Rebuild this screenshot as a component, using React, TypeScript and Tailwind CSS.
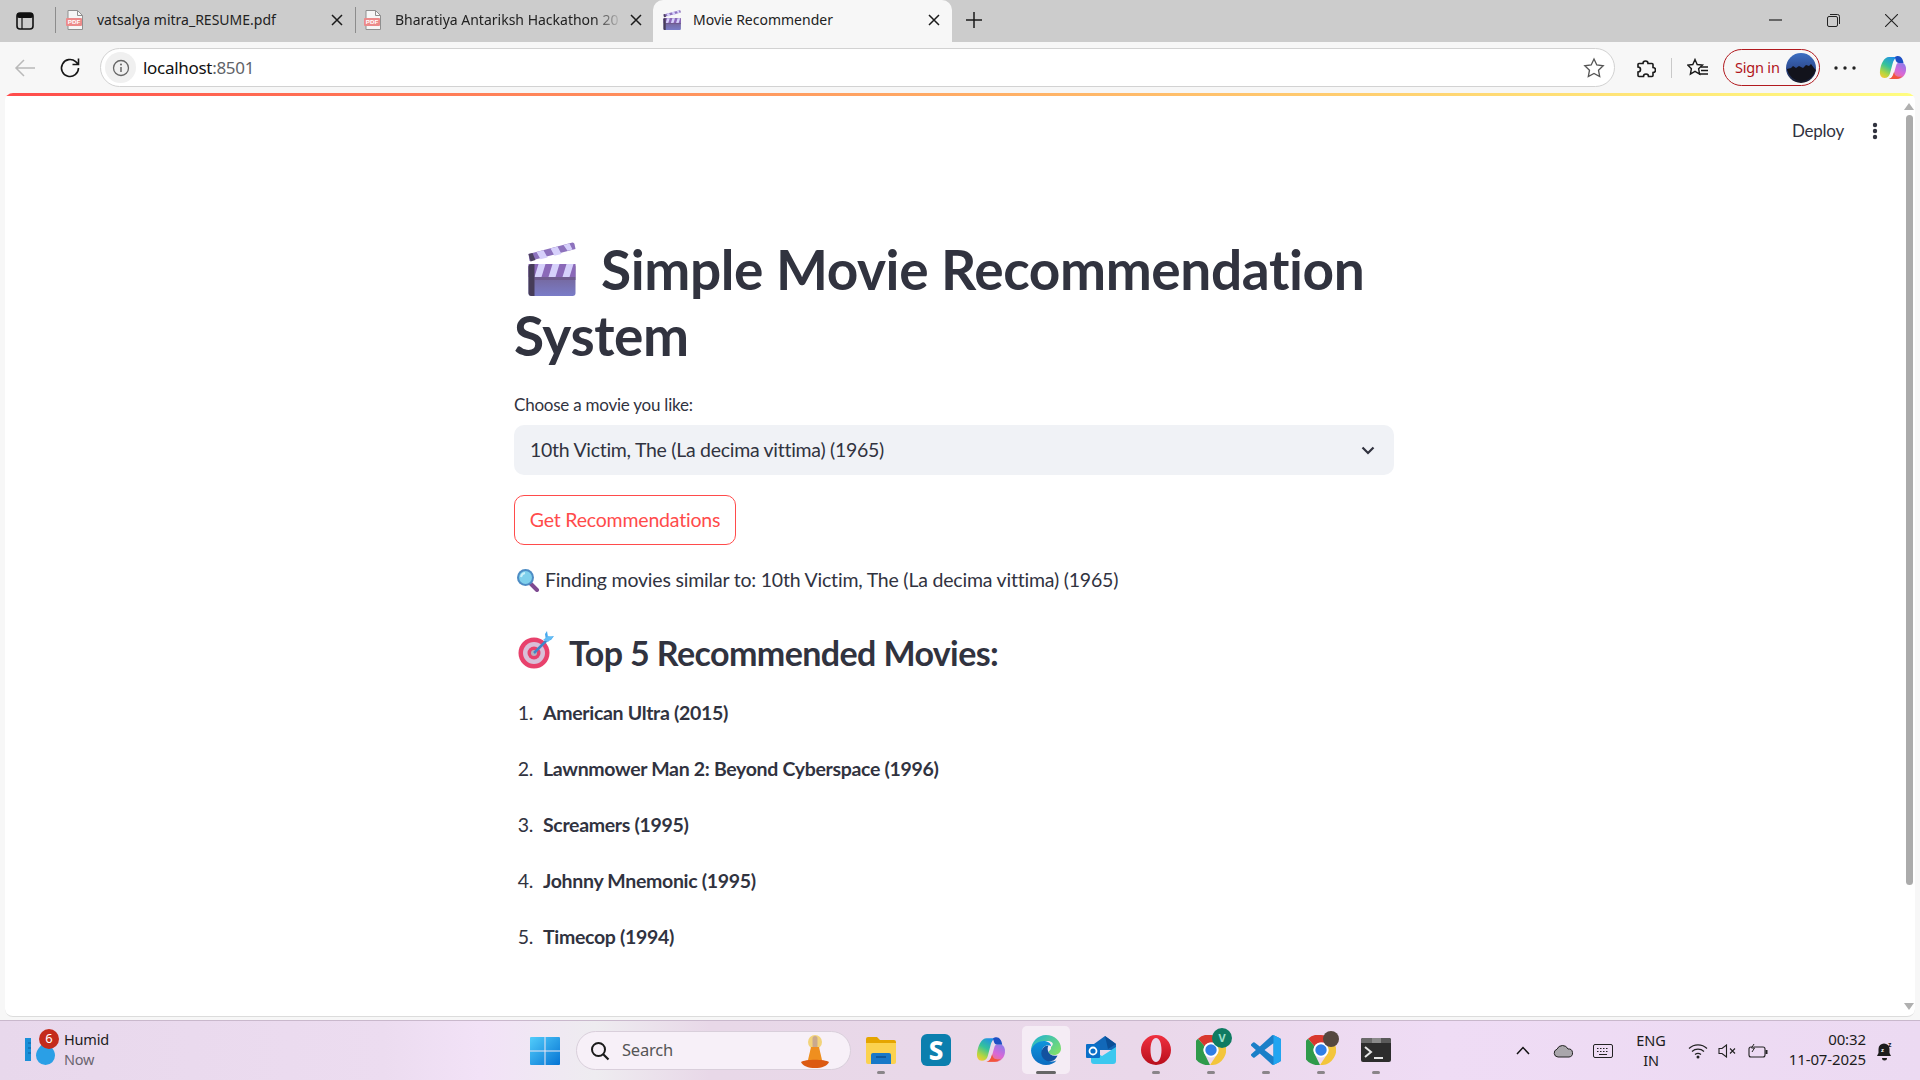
import React from "react";

const UI = "font-['Noto_Sans','Open_Sans',sans-serif]";

function PdfIcon() {
  return (
    <svg width="20" height="22" viewBox="0 0 20 22" className="shrink-0">
      <path d="M3 1.500h9.500L17.500 6.500V20.500H3z" fill="#f6f6f6" stroke="#8f8f8f" strokeWidth="1" />
      <path d="M12.500 1.500V6.500H17.500" fill="none" stroke="#8f8f8f" strokeWidth="1" />
      <rect x="1" y="9" width="16" height="8" rx="1" fill="#ec8a8a" />
      <text x="9" y="15.400" textAnchor="middle" fontSize="6.200" fontWeight="700" fill="#fff" fontFamily="Liberation Sans">PDF</text>
    </svg>
  );
}

function Clapper({ w, h }: { w: number; h: number }) {
  return (
    <svg width={w} height={h} viewBox="0 0 48 54" className="shrink-0">
      <defs>
        <linearGradient id="clapBody" x1="0" y1="0" x2="0" y2="1">
          <stop offset="0" stopColor="#725a80" />
          <stop offset="1" stopColor="#7a7cc8" />
        </linearGradient>
      </defs>
      <path d="M1 12 45 0.500a2 2 0 0 1 2 1.500l1 5-46 12z" fill="#8d72bd" />
      <path d="M1 12l4-1 3 7-5 1.500z" fill="#4d4260" />
      <path d="M9 10 16 8.200 20 15.500 13 17.300zM23 6.400 30 4.600 34 11.900 27 13.700zM36 3 42 1.500 45 7.500 40 8.800z" fill="#d6d0fb" />
      <rect x="1" y="22" width="47" height="32" rx="3" fill="url(#clapBody)" />
      <path d="M1 22h47v13H1z" fill="#8a68b8" />
      <path d="M11 22h7l-4 13H7zM25 22h7l-4 13h-7zM39 22h7l-4 13h-7z" fill="#d6d0fb" />
      <rect x="7" y="35" width="41" height="3" fill="#6f5b8f" />
      <path d="M4 22h3v32H4a3 3 0 0 1-3-3V25a3 3 0 0 1 3-3z" fill="#463c58" />
    </svg>
  );
}

function Magnifier() {
  return (
    <svg width="24" height="24" viewBox="0 0 24 24" className="shrink-0">
      <path d="M14 15l7 7" stroke="#7e4a91" strokeWidth="4" strokeLinecap="round" />
      <circle cx="9.500" cy="9.500" r="8.500" fill="#4d8cc4" />
      <circle cx="9.500" cy="9.500" r="6.500" fill="#7fd0ec" />
      <path d="M5 9a5 5 0 0 1 4-4" stroke="#c8f0fa" strokeWidth="2" fill="none" />
    </svg>
  );
}

function Target() {
  return (
    <svg width="40" height="38" viewBox="0 0 40 38" className="shrink-0">
      <circle cx="16" cy="22" r="15.500" fill="#e8416c" />
      <circle cx="16" cy="22" r="11" fill="#d9bfd8" />
      <circle cx="16" cy="22" r="6.500" fill="#e8416c" />
      <circle cx="16" cy="22" r="3" fill="#b5b0bd" />
      <path d="M16 22 31 7" stroke="#3f86c8" strokeWidth="2.500" />
      <path d="M27 3l2-3 1 6 6-1-3 4-5 1z" fill="#48a9ee" />
      <path d="M25 9l5-4 5 1-5 5z" fill="#63bdf5" />
    </svg>
  );
}

function CopilotIcon({ s, id }: { s: number; id: string }) {
  return (
    <svg width={s} height={s} viewBox="0 0 28 28" className="shrink-0">
      <defs>
        <linearGradient id={`${id}A`} x1="0.700" y1="0" x2="0.200" y2="1">
          <stop offset="0" stopColor="#1f8fe8" />
          <stop offset="0.450" stopColor="#35c39a" />
          <stop offset="0.800" stopColor="#b6d63e" />
          <stop offset="1" stopColor="#f0c93a" />
        </linearGradient>
        <linearGradient id={`${id}B`} x1="0.800" y1="0" x2="0.200" y2="1">
          <stop offset="0" stopColor="#8e7bea" />
          <stop offset="0.500" stopColor="#d868d8" />
          <stop offset="1" stopColor="#f77c6a" />
        </linearGradient>
      </defs>
      <path d="M10 3h9c-3 .5-4.500 3-5.500 7L11 19.500C10.300 22 8.500 24 5.500 24 2 24 .5 21 1 17 1.700 10 5 3 10 3z" fill={`url(#${id}A)`} />
      <path d="M16 3c1-1 2-1 3-1 3 0 5 3 5.500 7H20c-2 0-3-1.500-3.500-3.500C16.200 4.500 16 3.500 16 3z" fill="#1d4fc4" />
      <path d="M19.500 9H24c2 1 3.500 3.500 3 7.500-.6 4.500-4 8.500-8.500 8.500H10c2.500-.5 4-2.500 5-6l2-7c.5-2 1-3 2.500-3z" fill={`url(#${id}B)`} />
      <path d="M9.500 25h8c2 0 4-1 5.500-2.500-2 .5-5 .5-6.500-1-1-1-1.200-2.500-1.500-3.500l-.5 1.500c-1 3.500-2.500 5-5 5.500z" fill="#f2543d" />
    </svg>
  );
}

function EdgeIcon() {
  return (
    <svg width="30" height="30" viewBox="0 0 30 30">
      <defs>
        <linearGradient id="edgeG" x1="0" y1="0" x2="1" y2="0.800">
          <stop offset="0" stopColor="#1bb0d8" />
          <stop offset="1" stopColor="#7fe06a" />
        </linearGradient>
        <linearGradient id="edgeB" x1="0" y1="0" x2="0" y2="1">
          <stop offset="0" stopColor="#0f94dc" />
          <stop offset="1" stopColor="#0c6cc0" />
        </linearGradient>
      </defs>
      <path d="M15 0c8.500 0 15 6 15 13.500 0 4-3 6.500-7 6.500-3 0-5.500-1-5.500-2.500 0-2 3-2 2.500-5.500C24.500 8 20 5.500 15 6 8 6.500 3 10 0 15 .5 6.500 7 0 15 0z" fill="url(#edgeG)" />
      <path d="M0 15C2 9.500 7 6 12.500 6 17 6 20 8.500 20 11c-3-1.500-7-.5-8.500 3-1.800 4.500.5 10 6.500 12 2 .7 5 .5 7.500-.5-2.500 2.800-6 4.500-10.500 4.500C7 30 0 23.500 0 15z" fill="url(#edgeB)" />
      <path d="M11.500 14c1.200-2.500 3.500-3.500 6-3.500-1 1.500-1 3.500-.5 5.500 1 3.500 4.500 5.500 9.500 4.500-1 2-2 3.800-4 5-2 .8-5 1-7 .2-5-2-6.500-8-4-11.700z" fill="#13529f" />
    </svg>
  );
}

function ChromeIcon({ badge }: { badge?: "v" | "p" }) {
  return (
    <div className="relative w-[30px] h-[30px]">
      <svg width="30" height="30" viewBox="0 0 30 30">
        <path d="M15 0a15 15 0 0 1 13 7.500H15a7.500 7.500 0 0 0-6.500 3.750L2 3.800A15 15 0 0 1 15 0z" fill="#d9382e" />
        <path d="M2 3.800 8.500 11.250a7.500 7.500 0 0 0 0 7.500L14 30A15 15 0 0 1 2 3.800z" fill="#2f9a4b" />
        <path d="M28 7.500A15 15 0 0 1 14 30l7.500-11.250a7.500 7.500 0 0 0 0-7.500z" fill="#f3c53c" />
        <circle cx="15" cy="15" r="7.500" fill="#fff" />
        <circle cx="15" cy="15" r="5.700" fill="#2f7ee6" />
      </svg>
      {badge === "v" && (
        <div className="absolute -top-[7px] -right-[6px] w-[20px] h-[20px] rounded-full bg-[#0f7b62] text-[#9fe0cc] text-[11px] font-bold flex items-center justify-center">V</div>
      )}
      {badge === "p" && (
        <div className="absolute -top-[4px] -right-[3px] w-[16px] h-[16px] rounded-full bg-[#55473f]" />
      )}
    </div>
  );
}

function Slot({ children, dot = true, active = false }: { children: React.ReactNode; dot?: boolean; active?: boolean }) {
  return (
    <div className={`relative w-[48px] h-[48px] rounded-[5px] flex items-center justify-center ${active ? "bg-[#f5ecf5]" : ""}`}>
      {children}
      {dot && (
        <div className={`absolute bottom-0 left-1/2 -translate-x-1/2 h-[3.500px] rounded-full ${active ? "w-[20px] bg-[#666666]" : "w-[8px] bg-[#8a8589]"}`} />
      )}
    </div>
  );
}

const movies = [
  "American Ultra (2015)",
  "Lawnmower Man 2: Beyond Cyberspace (1996)",
  "Screamers (1995)",
  "Johnny Mnemonic (1995)",
  "Timecop (1994)",
];

function Tab({ title, active, icon, fade, pad }: { title: string; active?: boolean; icon: React.ReactNode; fade?: boolean; pad: string }) {
  return (
    <div className={`relative h-[42px] w-[299px] shrink-0 flex items-center pb-[3px] pr-[12px] ${pad} ${active ? "bg-[#f7f7f7] rounded-t-[10px]" : ""}`}>
      {icon}
      <span className={`ml-[12px] flex-1 whitespace-nowrap text-[14px] text-[#222] ${fade ? "[mask-image:linear-gradient(to_right,black_88%,transparent)]" : ""}`}>{title}</span>
      <svg width="12" height="12" viewBox="0 0 12 12" className="ml-[8px] shrink-0">
        <path d="M1 1l10 10M11 1 1 11" stroke="#1b1b1b" strokeWidth="1.500" />
      </svg>
    </div>
  );
}

export default function App() {
  return (
    <div className={`w-[1920px] h-[1080px] overflow-hidden flex flex-col bg-[#f7f7f7] ${UI}`}>
      {/* Tab strip */}
      <div className="h-[42px] shrink-0 bg-[#cccccc] flex items-center">
        <div className="w-[55px] h-[42px] flex items-center justify-center shrink-0">
          <svg width="20" height="20" viewBox="0 0 20 20" className="mr-[5px]">
            <rect x="2" y="2" width="16" height="16" rx="3" fill="none" stroke="#111" strokeWidth="1.600" />
            <rect x="2" y="2" width="16" height="5" rx="2" fill="#111" />
            <path d="M7 7v11" stroke="#111" strokeWidth="1.200" />
          </svg>
        </div>
        <div className="w-px h-[26px] bg-[#8c8c8c] -mt-[2px] shrink-0" />
        <div className="w-[299px] shrink-0">
          <Tab title="vatsalya mitra_RESUME.pdf" icon={<PdfIcon />} pad="pl-[9px]" />
        </div>
        <div className="w-px h-[26px] bg-[#8c8c8c] -mt-[2px] shrink-0" />
        <div className="w-[297px] shrink-0 overflow-hidden">
          <Tab title="Bharatiya Antariksh Hackathon 20" icon={<PdfIcon />} fade pad="pl-[7px] pr-[13px]" />
        </div>
        <Tab title="Movie Recommender" active icon={<Clapper w={18} h={20} />} pad="pl-[10px]" />
        <div className="w-[44px] h-[42px] flex items-center justify-center shrink-0">
          <svg width="18" height="18" viewBox="0 0 18 18" className="-mt-[2px]">
            <path d="M9 1v16M1 9h16" stroke="#1a1a1a" strokeWidth="1.500" />
          </svg>
        </div>
        <div className="flex-1" />
        <div className="flex items-center h-[42px] pb-[2px] pr-[22px] gap-[45px]">
          <svg width="13" height="2" viewBox="0 0 13 2"><path d="M0 1h13" stroke="#222" strokeWidth="1.200" /></svg>
          <svg width="13" height="13" viewBox="0 0 13 13">
            <rect x="0.500" y="2.500" width="10" height="10" rx="1.500" fill="none" stroke="#222" />
            <path d="M3 .500h7.500a2 2 0 0 1 2 2V10" fill="none" stroke="#222" />
          </svg>
          <svg width="13" height="13" viewBox="0 0 13 13"><path d="M0 0l13 13M13 0 0 13" stroke="#222" strokeWidth="1.100" /></svg>
        </div>
      </div>

      {/* Toolbar */}
      <div className="h-[51px] shrink-0 bg-[#f7f7f7] flex items-center">
        <div className="w-[100px] flex items-center pl-[14px] shrink-0">
          <svg width="22" height="20" viewBox="0 0 22 20"><path d="M21 10H2M10 2 2 10l8 8" fill="none" stroke="#b9b9b9" strokeWidth="1.500" /></svg>
          <svg width="24" height="24" viewBox="0 0 24 24" className="ml-[22px]">
            <path d="M20.500 12a8.500 8.500 0 1 1-2.800-6.300L20.500 8.500M20.500 2.500V8.500H14.500" fill="none" stroke="#161616" strokeWidth="1.600" />
          </svg>
        </div>
        <div className="w-[1515px] h-[39px] rounded-full border border-[#d2d2d2] bg-white flex items-center pl-[4px] pr-[9px] shrink-0">
          <div className="w-[31px] h-[31px] rounded-full bg-[#f0f0f0] flex items-center justify-center">
            <svg width="18" height="18" viewBox="0 0 18 18">
              <circle cx="9" cy="9" r="7.500" fill="none" stroke="#666" strokeWidth="1.300" />
              <path d="M9 8v5" stroke="#666" strokeWidth="1.500" />
              <circle cx="9" cy="5.500" r="1" fill="#666" />
            </svg>
          </div>
          <span className="ml-[7px] text-[17px] tracking-[-0.3px] text-[#111]">localhost<span className="text-[#5f6368]">:8501</span></span>
          <div className="flex-1" />
          <svg width="22" height="22" viewBox="0 0 22 22">
            <path d="M11 2l2.800 6 6.400.8-4.700 4.400 1.200 6.400L11 16.500l-5.700 3.100 1.200-6.400L1.800 8.800 8.200 8z" fill="none" stroke="#555" strokeWidth="1.300" />
          </svg>
        </div>
        <svg width="20" height="20" viewBox="0 0 20 20" className="ml-[21px] shrink-0">
          <path d="M3 5.500h4a2.500 2.500 0 1 1 5 0h4a1 1 0 0 1 1 1v3a2.500 2.500 0 1 1 0 5v3a1 1 0 0 1-1 1h-3.500a2.500 2.500 0 0 0-5 0H3a1 1 0 0 1-1-1v-3.500a2.500 2.500 0 0 0 0-5V6.500a1 1 0 0 1 1-1z" fill="none" stroke="#1a1a1a" strokeWidth="1.600" />
        </svg>
        <div className="ml-[15px] w-px h-[20px] bg-[#c9c9c9] shrink-0" />
        <svg width="22" height="20" viewBox="0 0 22 20" className="ml-[15px] shrink-0">
          <path d="M8 1.500l2.200 5 5.300.6-3.900 3.600 1 5.300L8 13.300 3.400 16l1-5.300L.8 7.100l5-.6z" fill="none" stroke="#1a1a1a" strokeWidth="1.400" />
          <path d="M14 9h7M14 12.500h7M12 16h9" stroke="#1a1a1a" strokeWidth="1.300" />
        </svg>
        <div className="ml-[14px] w-[97px] h-[37px] rounded-full border-[1.500px] border-[#b11a1f] flex items-center pl-[11px] shrink-0">
          <span className="text-[14.500px] tracking-[-0.2px] text-[#b0141a] whitespace-nowrap">Sign in</span>
          <svg width="30" height="30" viewBox="0 0 30 30" className="ml-auto mr-[3px]">
            <defs>
              <linearGradient id="sky" x1="0" y1="0" x2="0" y2="1">
                <stop offset="0" stopColor="#3d6fc2" />
                <stop offset="0.550" stopColor="#2d4a8f" />
                <stop offset="1" stopColor="#14151f" />
              </linearGradient>
            </defs>
            <circle cx="15" cy="15" r="15" fill="url(#sky)" />
            <path d="M1 16l4-1 2-2 3 2 3-2 4 2 3-3 3 1 2-2 3 4 2 2a15 15 0 0 1-29 0z" fill="#12131c" />
          </svg>
        </div>
        <svg width="22" height="4" viewBox="0 0 22 4" className="ml-[14px] shrink-0">
          <circle cx="2" cy="2" r="1.700" fill="#222" /><circle cx="11" cy="2" r="1.700" fill="#222" /><circle cx="20" cy="2" r="1.700" fill="#222" />
        </svg>
        <div className="ml-[23px] shrink-0"><CopilotIcon s={28} id="copTop" /></div>
      </div>

      {/* Page */}
      <div className="h-[924px] shrink-0 mx-[5px] rounded-[8px] border-b border-[#dcdcdc] bg-white overflow-hidden flex flex-col font-['Lato',sans-serif]">
        <div className="h-[3px] shrink-0 bg-gradient-to-r from-[#ff4b4b] to-[#fffd80]" />
        <div className="flex-1 flex min-h-0">
          <div className="flex-1 relative flex flex-col items-center min-w-0">
            <div className="absolute top-[22px] right-[0px] flex items-center gap-[28px] pr-[25px]">
              <span className="text-[17px] tracking-[-0.25px] text-[#31333f]">Deploy</span>
              <svg width="6" height="18" viewBox="0 0 6 18">
                <circle cx="3" cy="3" r="2.200" fill="#31333f" /><circle cx="3" cy="9" r="2.200" fill="#31333f" /><circle cx="3" cy="15" r="2.200" fill="#31333f" />
              </svg>
            </div>
            <div className="w-[880px] pt-[140px] text-[#31333f]">
              <h1 className="text-[55px] font-bold leading-[66px] tracking-[-0.4px]">
                <span className="inline-block w-[87px] pl-[13px] align-[-6px]"><Clapper w={49} h={54} /></span>
                Simple Movie Recommendation System
              </h1>
              <div className="mt-[26px] text-[17px] tracking-[-0.23px] leading-[22px]">Choose a movie you like:</div>
              <div className="mt-[9px] h-[50px] rounded-[10px] bg-[#f0f2f6] flex items-center pl-[16px] pr-[18px]">
                <span className="text-[19.500px] tracking-[-0.28px] flex-1">10th Victim, The (La decima vittima) (1965)</span>
                <svg width="16" height="16" viewBox="0 0 16 16">
                  <path d="M2.500 5.500 8 11l5.500-5.500" fill="none" stroke="#31333f" strokeWidth="2.200" />
                </svg>
              </div>
              <button className="mt-[20px] h-[50px] w-[222px] rounded-[10px] border border-[#ff4b4b] bg-white text-[19.500px] tracking-[-0.2px] text-[#ff4b4b] flex items-center justify-center">Get Recommendations</button>
              <div className="mt-[20px] h-[30px] flex items-center text-[19.500px] tracking-[-0.2px]">
                <span className="ml-[2px] mr-[5px]"><Magnifier /></span>
                Finding movies similar to: 10th Victim, The (La decima vittima) (1965)
              </div>
              <h3 className="mt-[32px] h-[50px] flex items-center text-[34px] font-bold tracking-[-0.6px]">
                <span className="ml-[4px] mr-[11px] -mt-[4px]"><Target /></span>
                Top 5 Recommended Movies:
              </h3>
              <ol className="mt-[8px]">
                {movies.map((m, i) => (
                  <li key={m} className="h-[56px] flex items-center text-[19.500px] tracking-[-0.32px]">
                    <span className="w-[19px] text-right">{i + 1}.</span>
                    <span className="ml-[10px] font-bold">{m}</span>
                  </li>
                ))}
              </ol>
            </div>
          </div>
          <div className="w-[12px] shrink-0 flex flex-col items-center pt-[7px] pb-[6px]">
            <svg width="10" height="7" viewBox="0 0 10 7"><path d="M5 0l5 7H0z" fill="#b0b0b0" /></svg>
            <div className="mt-[5px] w-[7px] h-[770px] rounded-full bg-[#ababab]" />
            <div className="flex-1" />
            <svg width="10" height="7" viewBox="0 0 10 7"><path d="M5 7 0 0h10z" fill="#b0b0b0" /></svg>
          </div>
        </div>
      </div>

      <div className="h-[3px] shrink-0" />

      {/* Taskbar */}
      <div className="h-[60px] shrink-0 border-t border-[#c9b8cc] bg-[linear-gradient(to_right,#e8d8ec_0%,#ecdcf0_20%,#f2e2f7_25%,#eeecf0_31%,#e8d8e8_37%,#ead8ea_60%,#efdcf5_75%,#ecdaf2_100%)] flex items-center relative">
        <div className="w-[530px] shrink-0 flex items-center pl-[24px]">
          <div className="relative w-[32px] h-[36px] shrink-0">
            <svg width="32" height="36" viewBox="0 0 32 36">
              <rect x="1" y="5" width="6" height="23" fill="#1a8fd8" />
              <path d="M4 10h3M4 15h3M4 20h3" stroke="#0f5f9f" />
              <path d="M21.500 8c5 5 9.500 9 9.500 14.500a9.500 9.500 0 0 1-19 0C12 17 16.500 13 21.500 8z" fill="#2a9fe6" />
            </svg>
            <div className="absolute -top-[4px] left-[15px] w-[20px] h-[20px] rounded-full bg-[#c42b1c] text-white text-[13px] flex items-center justify-center">6</div>
          </div>
          <div className="ml-[8px] flex flex-col text-[14.500px] leading-[20px] tracking-[-0.2px] -mt-[4px]">
            <span className="text-[#1c1c1c]">Humid</span>
            <span className="text-[#6b6570]">Now</span>
          </div>
        </div>
        <svg width="30" height="30" viewBox="0 0 30 30" className="shrink-0">
          <defs>
            <linearGradient id="winG" x1="0" y1="0" x2="1" y2="1">
              <stop offset="0" stopColor="#52cdfb" />
              <stop offset="1" stopColor="#0573d3" />
            </linearGradient>
          </defs>
          <path d="M1 1h13.500v13.500H0V2a1 1 0 0 1 1-1zM15.500 1H29a1 1 0 0 1 1 1v12.500H15.500zM0 15.500h14.500V29H1a1 1 0 0 1-1-1zM15.500 15.500H30V28a1 1 0 0 1-1 1H15.500z" fill="url(#winG)" />
        </svg>
        <div className="ml-[16px] w-[275px] h-[39px] shrink-0 rounded-full bg-[#f7f0f8] border border-[#d9cfdb] flex items-center pl-[13px] pr-[21px]">
          <svg width="20" height="20" viewBox="0 0 20 20">
            <circle cx="8.500" cy="8.500" r="6.500" fill="none" stroke="#1a1a1a" strokeWidth="2" />
            <path d="M13 13l5.500 5.500" stroke="#1a1a1a" strokeWidth="2.200" />
          </svg>
          <span className="ml-[12px] text-[16.500px] tracking-[-0.2px] text-[#555]">Search</span>
          <div className="flex-1" />
          <svg width="28" height="34" viewBox="0 0 28 34">
            <circle cx="14" cy="8" r="7" fill="#f2d37a" />
            <rect x="11.500" y="2" width="5" height="13" rx="2.500" fill="#c9a98f" />
            <path d="M10 13h8l3 13H7z" fill="#ef8f1f" />
            <path d="M0 28c4-3 24-3 28 0-2 4-7 6-14 6S2 32 0 28z" fill="#dc5a12" />
          </svg>
        </div>
        <div className="ml-[6px] -mt-[1px] flex items-center gap-[7px] shrink-0">
          <Slot>
            <svg width="30" height="28" viewBox="0 0 30 28">
              <path d="M0 3a2 2 0 0 1 2-2h9l3 3h14a2 2 0 0 1 2 2v5H0z" fill="#e5a500" />
              <path d="M0 7h30v19a2 2 0 0 1-2 2H2a2 2 0 0 1-2-2z" fill="#fbd24f" />
              <path d="M5 19a2 2 0 0 1 2-2h16a2 2 0 0 1 2 2v9H5z" fill="#1878c8" />
              <path d="M10 21h10" stroke="#0d4f8f" strokeWidth="1.500" />
            </svg>
          </Slot>
          <Slot dot={false}>
            <div className="w-[30px] h-[32px] rounded-[6px] bg-[#0b7fae] text-white text-[26px] font-extrabold flex items-center justify-center">S</div>
          </Slot>
          <Slot dot={false}><CopilotIcon s={30} id="copBar" /></Slot>
          <Slot active><EdgeIcon /></Slot>
          <Slot dot={false}>
            <svg width="30" height="28" viewBox="0 0 30 28">
              <path d="M8 8 19 0l11 8v6H8z" fill="#1268b8" />
              <path d="M19 0l11 8-8 5z" fill="#0a4e96" />
              <path d="M5 14l11 6 14-9v14a3 3 0 0 1-3 3H8a3 3 0 0 1-3-3z" fill="#3cc8ef" />
              <rect x="0" y="8" width="14" height="14" rx="1" fill="#0a6fc8" />
              <circle cx="7" cy="15" r="3.500" fill="none" stroke="#fff" strokeWidth="1.800" />
            </svg>
          </Slot>
          <Slot>
            <svg width="30" height="30" viewBox="0 0 30 30">
              <defs>
                <linearGradient id="opG" x1="0" y1="0" x2="0" y2="1">
                  <stop offset="0" stopColor="#f0303f" />
                  <stop offset="1" stopColor="#b80f1c" />
                </linearGradient>
              </defs>
              <path fillRule="evenodd" d="M15 0a15 15 0 1 1 0 30 15 15 0 0 1 0-30zm0 3c-3.500 0-5.500 5.500-5.500 12s2 12 5.500 12 5.500-5.500 5.500-12-2-12-5.500-12z" fill="url(#opG)" />
            </svg>
          </Slot>
          <Slot><ChromeIcon badge="v" /></Slot>
          <Slot>
            <svg width="30" height="30" viewBox="0 0 100 100">
              <path fillRule="evenodd" d="M70.900 99.300a6.200 6.200 0 0 0 4.900-.2l20.600-9.900a6.200 6.200 0 0 0 3.500-5.600V16.400a6.200 6.200 0 0 0-3.500-5.600L75.800.9a6.200 6.200 0 0 0-7.100 1.200L29.400 38 12.200 25a4.200 4.200 0 0 0-5.300.2L1.400 30.300a4.200 4.200 0 0 0 0 6.200L16.300 50 1.400 63.500a4.200 4.200 0 0 0 0 6.200l5.500 5a4.200 4.200 0 0 0 5.300.2L29.400 62l39.300 35.900c.7.6 1.400 1.100 2.200 1.400zM75 27.300 45.200 50 75 72.700z" fill="#1a7fc8" />
              <path d="M75.800 99.100a6.200 6.200 0 0 1-7.100-1.200c2.300 2.300 6.300.7 6.300-2.600V4.700c0-3.300-4-4.900-6.300-2.600a6.200 6.200 0 0 1 7.100-1.200l20.600 9.900a6.200 6.200 0 0 1 3.500 5.600v67.200a6.200 6.200 0 0 1-3.500 5.600z" fill="#21a5f1" />
            </svg>
          </Slot>
          <Slot><ChromeIcon badge="p" /></Slot>
          <Slot>
            <svg width="30" height="24" viewBox="0 0 30 24">
              <rect width="30" height="24" rx="2" fill="#2d2d2d" />
              <path d="M2 0h9v5H0V2a2 2 0 0 1 2-2z" fill="#6a6a6a" />
              <path d="M11 0h9v5h-9z" fill="#8a8a8a" />
              <path d="M20 0h8a2 2 0 0 1 2 2v3H20z" fill="#5a5a5a" />
              <path d="M4 9l6 5-6 5" fill="none" stroke="#e6e6e6" strokeWidth="2" />
              <path d="M13 20h9" stroke="#e6e6e6" strokeWidth="2" />
            </svg>
          </Slot>
        </div>
        <div className="ml-auto flex items-center text-[14.500px] text-[#1c1c1c] tracking-[-0.1px] pr-[27px]">
          <svg width="14" height="9" viewBox="0 0 14 9"><path d="M1 8l6-6.500L13 8" fill="none" stroke="#111" strokeWidth="1.500" /></svg>
          <svg width="20" height="14" viewBox="0 0 20 14" className="ml-[23px]">
            <path d="M5 13a4 4 0 0 1-1-7.800A6 6 0 0 1 15 5a4 4 0 0 1 1 8z" fill="#a9a6ab" stroke="#222" strokeWidth="1" />
          </svg>
          <svg width="20" height="14" viewBox="0 0 20 14" className="ml-[20px]">
            <rect x="0.500" y="0.500" width="19" height="13" rx="1.500" fill="none" stroke="#222" />
            <path d="M4 4.500h12M4 7.500h12" stroke="#222" strokeDasharray="1.500 1.500" />
            <path d="M6 10.500h8" stroke="#222" />
          </svg>
          <div className="ml-[22px] -mt-[2px] w-[32px] flex flex-col items-center leading-[20px]"><span>ENG</span><span>IN</span></div>
          <svg width="20" height="16" viewBox="0 0 20 16" className="ml-[21px]">
            <path d="M1 5.500a13 13 0 0 1 18 0M4 8.500a9 9 0 0 1 12 0M7 11.500a5 5 0 0 1 6 0" fill="none" stroke="#222" strokeWidth="1.200" />
            <circle cx="10" cy="14" r="1.500" fill="#222" />
          </svg>
          <svg width="20" height="14" viewBox="0 0 20 14" className="ml-[10px]">
            <path d="M1 4.500h3L8.500 1v12L4 9.500H1z" fill="none" stroke="#222" strokeWidth="1.100" />
            <path d="M12 4.500l5 5M17 4.500l-5 5" stroke="#222" strokeWidth="1.100" />
          </svg>
          <svg width="20" height="14" viewBox="0 0 20 14" className="ml-[10px]">
            <rect x="1" y="3" width="16" height="10" rx="2" fill="none" stroke="#222" strokeWidth="1.100" />
            <rect x="17.500" y="6" width="2" height="4" fill="#222" />
            <path d="M6 0 3.500 4h3L4 8" fill="#f3e2f5" stroke="#222" strokeWidth="1" />
          </svg>
          <div className="w-[98px] -mt-[4px] flex flex-col items-end leading-[20px] whitespace-nowrap text-[15px]"><span>00:32</span><span>11-07-2025</span></div>
          <svg width="17" height="20" viewBox="0 0 17 20" className="ml-[10px]">
            <path d="M8 2.500a5.500 5.500 0 0 0-5.500 5.500v4L1 15h14l-1.500-3V8A5.500 5.500 0 0 0 8 2.500z" fill="#1c1c1c" />
            <path d="M6 17a2.500 2.500 0 0 0 5 0z" fill="#1c1c1c" />
            <text x="5" y="11" fontSize="6" fontWeight="700" fill="#fff" fontFamily="Liberation Sans">z</text>
            <text x="12" y="6" fontSize="7" fontWeight="700" fill="#1c1c1c" fontFamily="Liberation Sans">z</text>
          </svg>
        </div>
      </div>
    </div>
  );
}
